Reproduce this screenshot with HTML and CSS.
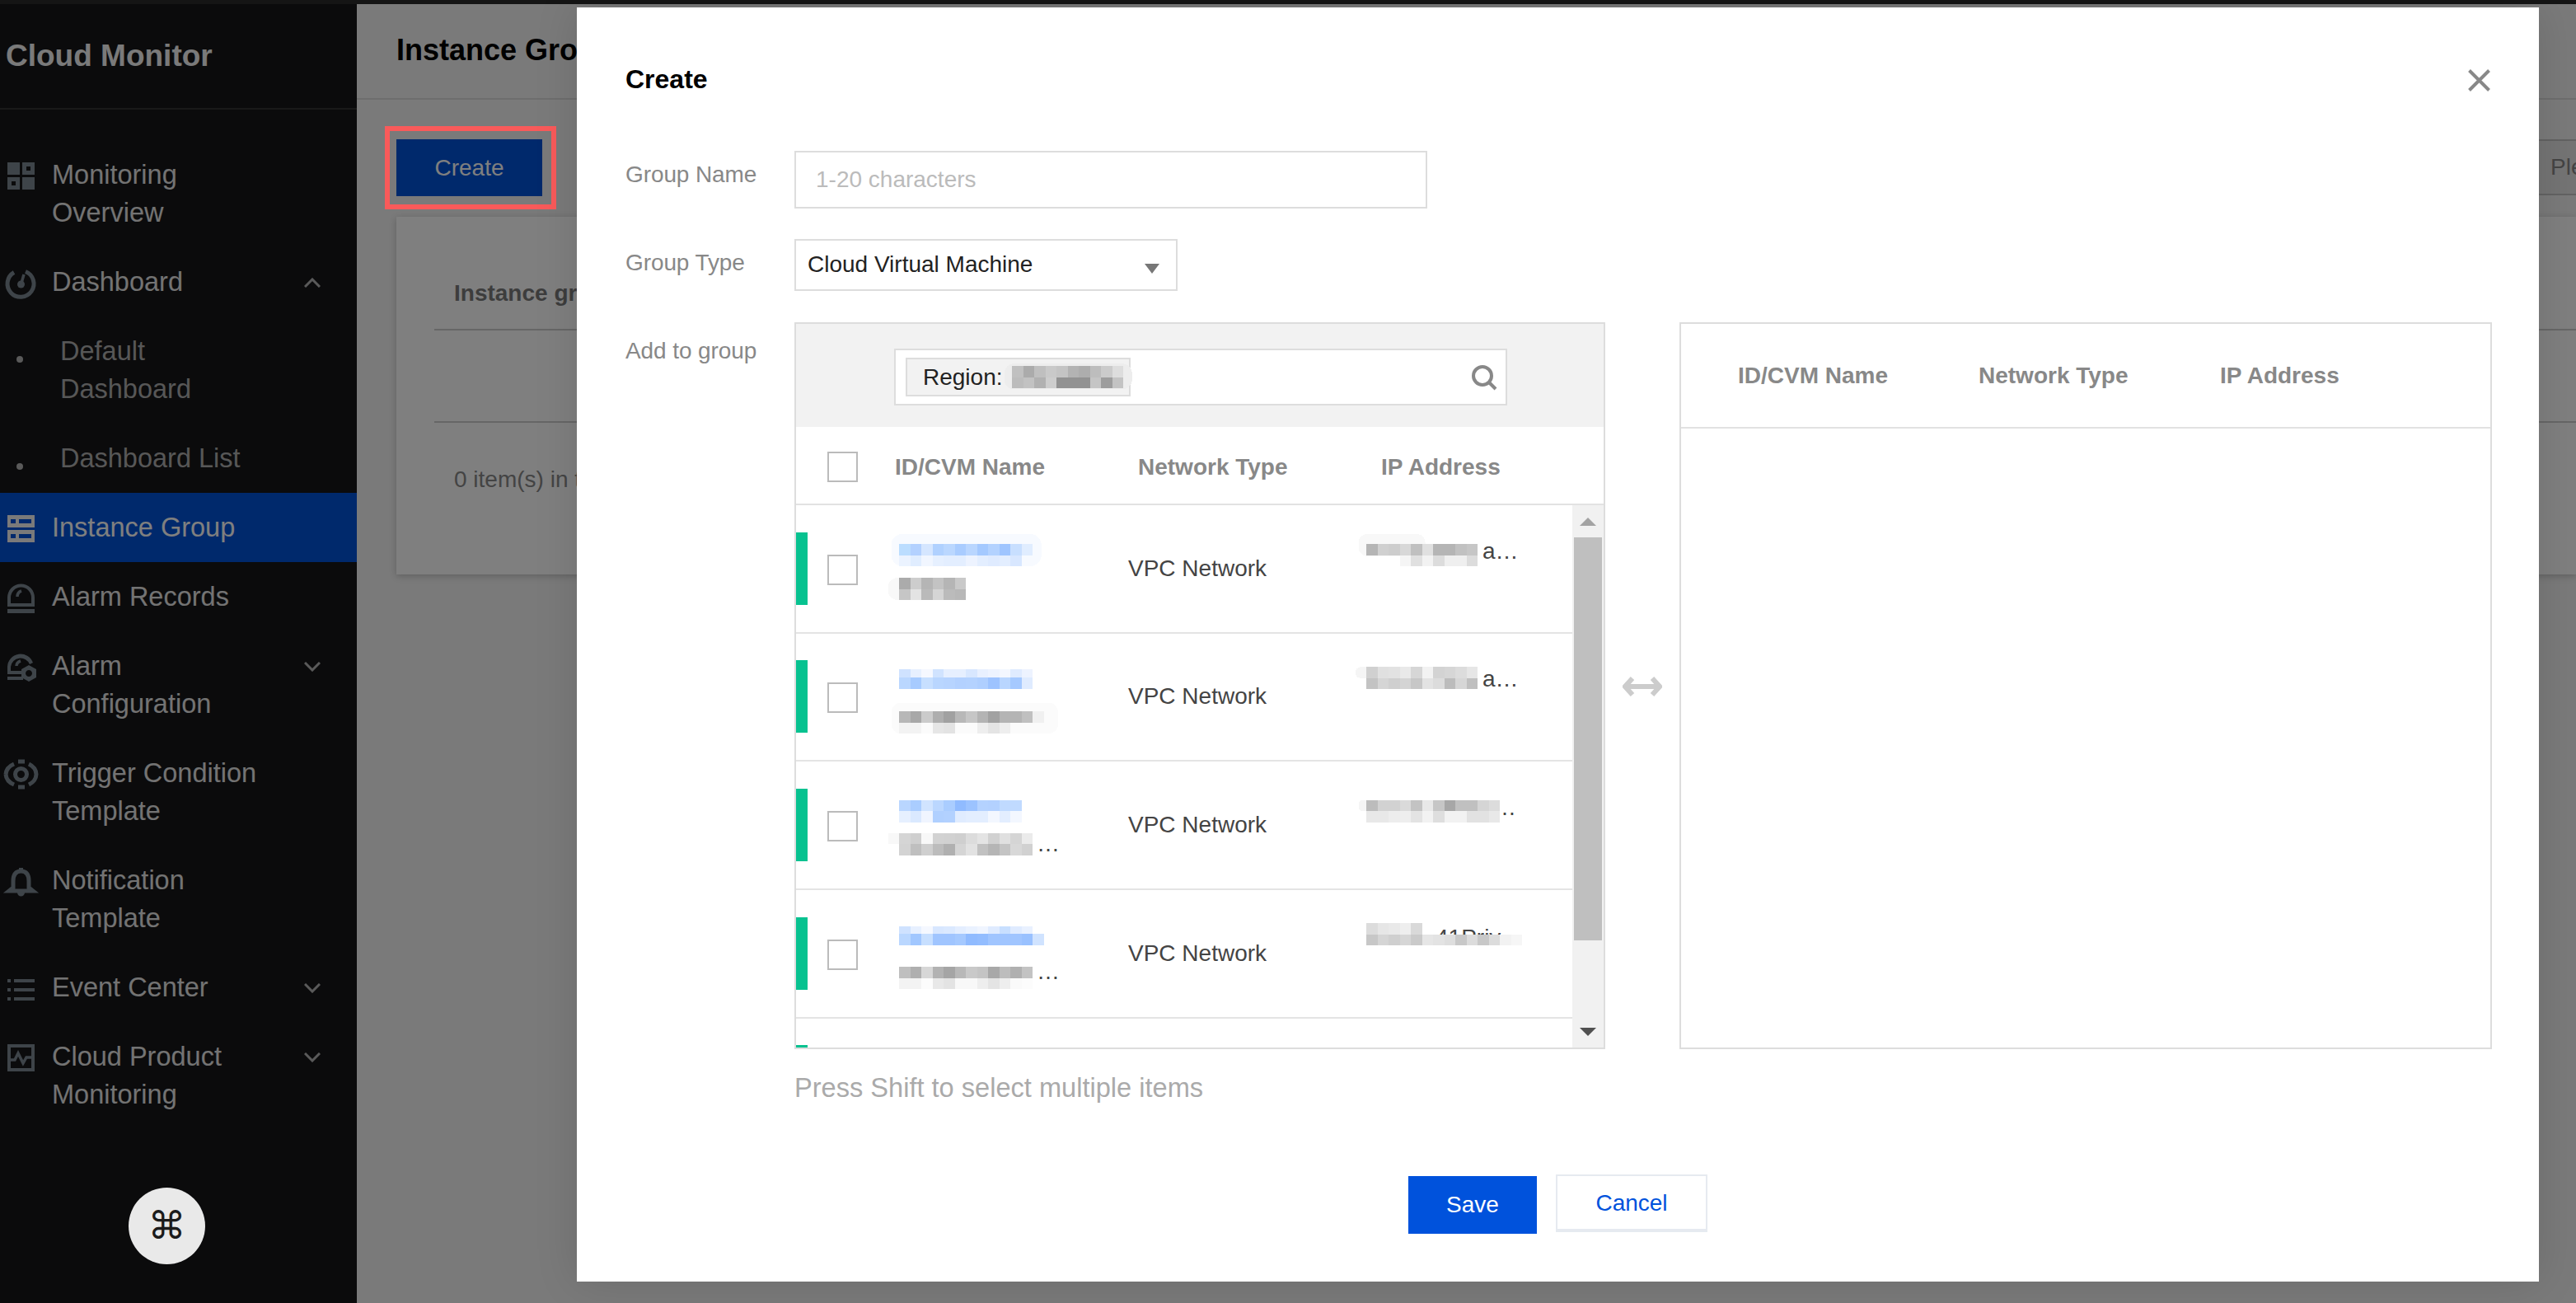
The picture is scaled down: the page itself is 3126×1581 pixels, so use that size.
FILE: index.html
```html
<!DOCTYPE html>
<html lang="en">
<head>
<meta charset="utf-8">
<title>Cloud Monitor - Instance Group</title>
<link rel="stylesheet" href="styles.css">
</head>
<body>
<div class="page">
  <div class="top-strip"></div>
  <div class="app">
    <aside class="sidebar">
      <div class="brand">Cloud Monitor</div>
      <nav class="nav">
        <a class="nav-item two">
          <svg class="nav-icon" viewBox="0 0 33 33"><path fill-rule="evenodd" d="M0 0h15v15H0zM18 0h15v15H18zM23 5v5h5V5zM0 18h15v15H0zM5 23v5h5v-5zM18 18h15v15H18z"/></svg>
          <span class="nav-label">Monitoring<br>Overview</span>
        </a>
        <a class="nav-item">
          <svg class="nav-icon" viewBox="0 0 33 33"><path class="line bold" d="M8 3.500A16 16 0 1 0 22 2.500"/><path class="line thin" d="M16.500 18 20 6"/><circle cx="16.500" cy="18" r="4.500"/></svg>
          <span class="nav-label">Dashboard</span>
          <svg class="chev" viewBox="0 0 20 12"><path d="M1 11 10 2l9 9"/></svg>
        </a>
        <a class="nav-item sub two"><i class="dot"></i><span class="nav-label">Default<br>Dashboard</span></a>
        <a class="nav-item sub"><i class="dot"></i><span class="nav-label">Dashboard List</span></a>
        <a class="nav-item active">
          <svg class="nav-icon" viewBox="0 0 33 33"><path fill-rule="evenodd" d="M0 0h33v15H0zM4 5v5h6V5zM14 5v5h15V5zM0 18h33v15H0zM4 23v5h6v-5zM14 23v5h15v-5z"/></svg>
          <span class="nav-label">Instance Group</span>
        </a>
        <a class="nav-item">
          <svg class="nav-icon" viewBox="0 0 33 33"><path fill-rule="evenodd" d="M0 27V16a16.500 16.500 0 0 1 33 0v11zM4 23h25v-7a12.500 12.500 0 0 0-25 0zM0 30h33v5H0z"/><path class="line thin" d="M12 15c0-4 2-6 5-7"/></svg>
          <span class="nav-label">Alarm Records</span>
        </a>
        <a class="nav-item two">
          <svg class="nav-icon" viewBox="0 0 33 33"><path fill-rule="evenodd" d="M0 25V16a16 16 0 0 1 31-5l-4 2A12 12 0 0 0 4 16v5h13v4zM0 28h19v4H0z"/><path class="line thin" d="M11 15c0-3 2-5 5-6"/><path fill-rule="evenodd" d="M26 14l9 5v10l-9 5-9-5V19zM26 20a4 4 0 1 0 .01 0z"/></svg>
          <span class="nav-label">Alarm<br>Configuration</span>
          <svg class="chev" viewBox="0 0 20 12"><path d="M1 1l9 9 9-9"/></svg>
        </a>
        <a class="nav-item two">
          <svg class="nav-icon" viewBox="0 0 33 33"><path class="line bold" d="M-2 16.500A18 15 0 0 1 8 4M13 1h8M26 4A18 15 0 0 1 35 16.500 18 15 0 0 1 26 29M21 32h-8M8 29A18 15 0 0 1-2 16.500"/><circle class="line bold" cx="16.500" cy="16.500" r="7"/></svg>
          <span class="nav-label">Trigger Condition<br>Template</span>
        </a>
        <a class="nav-item two">
          <svg class="nav-icon" viewBox="0 0 33 33"><path class="line bold" d="M16.500 4C9 4 7 10 7 16v8l-5 4h29l-5-4v-8c0-6-2-12-9.500-12z"/><path d="M14 0h5v4h-5zM12 30h9a4.500 4.500 0 0 1-9 0z"/></svg>
          <span class="nav-label">Notification<br>Template</span>
        </a>
        <a class="nav-item">
          <svg class="nav-icon" viewBox="0 0 33 33"><path d="M0 5h4v4H0zM8 5h25v4H8zM0 16h4v4H0zM8 16h25v4H8zM0 27h4v4H0zM8 27h25v4H8z"/></svg>
          <span class="nav-label">Event Center</span>
          <svg class="chev" viewBox="0 0 20 12"><path d="M1 1l9 9 9-9"/></svg>
        </a>
        <a class="nav-item two">
          <svg class="nav-icon" viewBox="0 0 33 33"><path fill-rule="evenodd" d="M0 0h33v33H0zM4 4v25h25V4z"/><path class="line thin" d="M3 19h6l4-8 6 12 4-7h7"/></svg>
          <span class="nav-label">Cloud Product<br>Monitoring</span>
          <svg class="chev" viewBox="0 0 20 12"><path d="M1 1l9 9 9-9"/></svg>
        </a>
      </nav>
      <button class="fab">⌘</button>
    </aside>
    <main class="main">
      <header class="main-head"><h1>Instance Group</h1></header>
      <div class="toolbar">
        <div class="create-wrap">
          <button class="btn-create">Create</button>
          <span class="callout"></span>
        </div>
        <div class="toolbar-search">Please enter</div>
      </div>
      <section class="card">
        <div class="card-head">Instance group</div>
        <div class="card-empty"></div>
        <div class="card-foot">0 item(s) in total</div>
      </section>
    </main>
  </div>
  <div class="mask"></div>

  <div class="modal">
    <h2 class="modal-title">Create</h2>
    <svg class="modal-close" viewBox="0 0 27 27"><path d="M1.500 1.500l24 24M25.500 1.500l-24 24"/></svg>

    <div class="form-row row-name">
      <label class="form-label">Group Name</label>
      <div class="input">1-20 characters</div>
    </div>
    <div class="form-row row-type">
      <label class="form-label">Group Type</label>
      <div class="select">Cloud Virtual Machine<i class="select-arrow"></i></div>
    </div>
    <div class="form-row row-add">
      <label class="form-label">Add to group</label>
      <div class="form-main">
        <div class="transfer">
          <div class="panel">
            <div class="filter">
              <div class="search">
                <div class="tag">Region:
                  <svg class="blur-region" viewBox="0 0 135 27"><g transform="scale(13.500)"><rect class="h" x="-.7" y="-.2" width="11.500" height="2.300" rx=".9" fill="#ededed"/><rect x="0" fill="#c0c0c0"/><rect x="1" fill="#ababab"/><rect x="2" fill="#bfbfbf"/><rect x="3" fill="#c9c9c9"/><rect x="4" fill="#c4c4c4"/><rect x="5" fill="#b3b3b3"/><rect x="6" fill="#adadad"/><rect x="7" fill="#bdbdbd"/><rect x="8" fill="#cbcbcb"/><rect x="9" fill="#ddd"/><rect x="0" y="1" fill="#bcbcbc"/><rect x="1" y="1" fill="#c2c2c2"/><rect x="2" y="1" fill="#b1b1b1"/><rect x="3" y="1" fill="#cdcdcd"/><rect x="4" y="1" fill="#929292"/><rect x="5" y="1" fill="#929292"/><rect x="6" y="1" fill="#929292"/><rect x="7" y="1" fill="#c5c5c5"/><rect x="8" y="1" fill="#9d9d9d"/><rect x="9" y="1" fill="#c3c3c3"/></g></svg>
                </div>
                <svg class="search-icon" viewBox="0 0 32 32"><circle cx="14" cy="14" r="11"/><path d="M22 22l8 8"/></svg>
              </div>
            </div>
            <div class="thead">
              <span class="check head-check"></span>
              <span class="th th-id">ID/CVM Name</span>
              <span class="th th-net">Network Type</span>
              <span class="th">IP Address</span>
            </div>
            <div class="tbody">
              <div class="list">
                <div class="row">
                  <i class="bar"></i><span class="check"></span>
                  <svg class="blur-name" viewBox="0 0 289 153"><g transform="translate(11 47) scale(13.500)"><rect class="h" x="-.7" y="-.9" width="13.500" height="2.900" rx="1" fill="#f7faff"/><rect x="0" fill="#bdf"/><rect x="1" fill="#b3d1ff"/><rect x="2" fill="#d5e6ff"/><rect x="3" fill="#b0d1ff"/><rect x="4" fill="#bad7ff"/><rect x="5" fill="#a9ccff"/><rect x="6" fill="#b9d6ff"/><rect x="7" fill="#a4c9ff"/><rect x="8" fill="#b3d2ff"/><rect x="9" fill="#9fc5ff"/><rect x="10" fill="#c8dfff"/><rect x="11" fill="#e0edff"/><rect x="0" y="1" fill="#ebf3ff"/><rect x="1" y="1" fill="#e0edff"/><rect x="2" y="1" fill="#f1f6ff"/><rect x="3" y="1" fill="#e6f0ff"/><rect x="4" y="1" fill="#e3eeff"/><rect x="5" y="1" fill="#e3eeff"/><rect x="6" y="1" fill="#edf3ff"/><rect x="7" y="1" fill="#e3eeff"/><rect x="8" y="1" fill="#dfebff"/><rect x="9" y="1" fill="#e3eeff"/><rect x="10" y="1" fill="#d8e7ff"/></g><g transform="translate(11 88) scale(13.500)"><rect class="h" x="-1" y="0" width="7" height="2" rx=".9" fill="#f8f8f8"/><rect x="0" fill="#ababab"/><rect x="1" fill="#cdcdcd"/><rect x="2" fill="#b5b5b5"/><rect x="3" fill="#c3c3c3"/><rect x="4" fill="#b5b5b5"/><rect x="5" fill="#c9c9c9"/><rect x="0" y="1" fill="#c6c6c6"/><rect x="1" y="1" fill="#e3e3e3"/><rect x="2" y="1" fill="#bababa"/><rect x="3" y="1" fill="#d5d5d5"/><rect x="4" y="1" fill="#bbb"/><rect x="5" y="1" fill="#b8b8b8"/></g></svg>
                  <span class="vpc">VPC Network</span>
                  <svg class="blur-ip" viewBox="0 0 210 153"><text x="159" y="65">a…</text><g transform="translate(18 47) scale(13.500)"><rect class="h" x="-.7" y="-.9" width="6" height="2" rx=".8" fill="#f8f8f8"/><rect x="0" fill="#b5b5b5"/><rect x="1" fill="#d0d0d0"/><rect x="2" fill="#cdcdcd"/><rect x="3" fill="#d8d8d8"/><rect x="4" fill="#c0c0c0"/><rect x="5" fill="#e0e0e0"/><rect x="6" fill="#b5b5b5"/><rect x="7" fill="#b5b5b5"/><rect x="8" fill="#c1c1c1"/><rect x="9" fill="#c6c6c6"/><rect x="3" y="1" fill="#f5f5f5"/><rect x="4" y="1" fill="#e0e0e0"/><rect x="5" y="1" fill="#f2f2f2"/><rect x="6" y="1" fill="#dcdcdc"/><rect x="7" y="1" fill="#efefef"/><rect x="8" y="1" fill="#efefef"/><rect x="9" y="1" fill="#dcdcdc"/></g></svg>
                </div>
                <div class="row">
                  <i class="bar"></i><span class="check"></span>
                  <svg class="blur-name" viewBox="0 0 289 153"><g transform="translate(11 39.830) scale(13.500)"><rect x="0" fill="#cfe2ff"/><rect x="1" fill="#e7f0ff"/><rect x="2" fill="#f5f8ff"/><rect x="3" fill="#d0e3ff"/><rect x="4" fill="#e6efff"/><rect x="5" fill="#e6efff"/><rect x="6" fill="#d8e7ff"/><rect x="7" fill="#e8f0ff"/><rect x="8" fill="#edf3ff"/><rect x="9" fill="#f3f7ff"/><rect x="10" fill="#dfebff"/><rect x="11" fill="#edf3ff"/><rect x="0" y="1" fill="#bad7ff"/><rect x="1" y="1" fill="#a7cbff"/><rect x="2" y="1" fill="#c7dfff"/><rect x="3" y="1" fill="#b9d6ff"/><rect x="4" y="1" fill="#b7d4ff"/><rect x="5" y="1" fill="#b3d1ff"/><rect x="6" y="1" fill="#b4d2ff"/><rect x="7" y="1" fill="#afcfff"/><rect x="8" y="1" fill="#9dc3ff"/><rect x="9" y="1" fill="#b9d6ff"/><rect x="10" y="1" fill="#a5c9ff"/><rect x="11" y="1" fill="#dfebff"/><rect class="h" x="-1" y="-.3" width="15" height=".56" fill="#fff"/></g><g transform="translate(11 94.330) scale(13.500)"><rect class="h" x="-.7" y="-.8" width="15" height="2.800" rx=".9" fill="#fbfbfb"/><rect x="0" fill="#b7b7b7"/><rect x="1" fill="#a8a8a8"/><rect x="2" fill="#cbcbcb"/><rect x="3" fill="#aeaeae"/><rect x="4" fill="#a1a1a1"/><rect x="5" fill="#b8b8b8"/><rect x="6" fill="#c6c6c6"/><rect x="7" fill="#b4b4b4"/><rect x="8" fill="#a2a2a2"/><rect x="9" fill="#b4b4b4"/><rect x="10" fill="#b4b4b4"/><rect x="11" fill="#c0c0c0"/><rect x="12" fill="#f0f0f0"/><rect x="0" y="1" fill="#f3f3f3"/><rect x="1" y="1" fill="#f3f3f3"/><rect x="3" y="1" fill="#e6e6e6"/><rect x="4" y="1" fill="#e3e3e3"/><rect x="7" y="1" fill="#eee"/><rect x="8" y="1" fill="#e4e4e4"/><rect x="9" y="1" fill="#eee"/></g></svg>
                  <span class="vpc">VPC Network</span>
                  <svg class="blur-ip" viewBox="0 0 210 153"><text x="159" y="64.330">a…</text><g transform="translate(18 40.330) scale(13.500)"><rect class="h" x="-1" y="0" width="3" height="1" rx=".5" fill="#f5f5f5"/><rect x="0" fill="#d0d0d0"/><rect x="1" fill="#e0e0e0"/><rect x="2" fill="#e2e2e2"/><rect x="3" fill="#e9e9e9"/><rect x="4" fill="#d6d6d6"/><rect x="5" fill="#f2f2f2"/><rect x="6" fill="#d3d3d3"/><rect x="7" fill="#d6d6d6"/><rect x="8" fill="#dcdcdc"/><rect x="9" fill="#e6e6e6"/><rect x="0" y="1" fill="#c3c3c3"/><rect x="1" y="1" fill="#d5d5d5"/><rect x="2" y="1" fill="#cfcfcf"/><rect x="3" y="1" fill="#d4d4d4"/><rect x="4" y="1" fill="#c7c7c7"/><rect x="5" y="1" fill="#e3e3e3"/><rect x="6" y="1" fill="#dcdcdc"/><rect x="7" y="1" fill="#bcbcbc"/><rect x="8" y="1" fill="#d6d6d6"/><rect x="9" y="1" fill="#bfbfbf"/></g></svg>
                </div>
                <div class="row">
                  <i class="bar"></i><span class="check"></span>
                  <svg class="blur-name" viewBox="0 0 289 153"><text x="178" y="108.700">…</text><g transform="translate(11 46.670) scale(13.500)"><rect x="0" fill="#b9d6ff"/><rect x="1" fill="#aacdff"/><rect x="2" fill="#d1e4ff"/><rect x="3" fill="#bbd7ff"/><rect x="4" fill="#aacdff"/><rect x="5" fill="#90bbff"/><rect x="6" fill="#9cc3ff"/><rect x="7" fill="#b4d2ff"/><rect x="8" fill="#b3d1ff"/><rect x="9" fill="#c0daff"/><rect x="10" fill="#c0daff"/><rect x="0" y="1" fill="#e6f0ff"/><rect x="1" y="1" fill="#dae9ff"/><rect x="2" y="1" fill="#f0f5ff"/><rect x="3" y="1" fill="#b0d0ff"/><rect x="4" y="1" fill="#b2d1ff"/><rect x="5" y="1" fill="#e0ecff"/><rect x="6" y="1" fill="#e3eeff"/><rect x="7" y="1" fill="#e3eeff"/><rect x="8" y="1" fill="#f3f7ff"/><rect x="9" y="1" fill="#e3eeff"/><rect x="10" y="1" fill="#f3f7ff"/></g><g transform="translate(11 86.670) scale(13.500)"><rect x="-1" fill="#f8f8f8"/><rect x="0" fill="#d5d5d5"/><rect x="1" fill="#cfcfcf"/><rect x="2" fill="#f8f8f8"/><rect x="3" fill="#d2d2d2"/><rect x="4" fill="#d1d1d1"/><rect x="5" fill="#cfcfcf"/><rect x="6" fill="#dcdcdc"/><rect x="7" fill="#e4e4e4"/><rect x="8" fill="#d1d1d1"/><rect x="9" fill="#e0e0e0"/><rect x="10" fill="#d5d5d5"/><rect x="11" fill="#ebebeb"/><rect x="0" y="1" fill="#d3d3d3"/><rect x="1" y="1" fill="#bfbfbf"/><rect x="2" y="1" fill="#cfcfcf"/><rect x="3" y="1" fill="#bcbcbc"/><rect x="4" y="1" fill="#b0b0b0"/><rect x="5" y="1" fill="#d5d5d5"/><rect x="6" y="1" fill="#e2e2e2"/><rect x="7" y="1" fill="#c1c1c1"/><rect x="8" y="1" fill="#b5b5b5"/><rect x="9" y="1" fill="#c4c4c4"/><rect x="10" y="1" fill="#d8d8d8"/><rect x="11" y="1" fill="#d1d1d1"/></g></svg>
                  <span class="vpc">VPC Network</span>
                  <svg class="blur-ip" viewBox="0 0 210 153"><text x="172" y="64.670">…</text><g transform="translate(18 46.670) scale(13.500)"><rect class="h" x="-.7" y="0" width="2" height="1" rx=".4" fill="#f5f5f5"/><rect x="0" fill="#bcbcbc"/><rect x="1" fill="#d2d2d2"/><rect x="2" fill="#d2d2d2"/><rect x="3" fill="#dadada"/><rect x="4" fill="#c3c3c3"/><rect x="5" fill="#e8e8e8"/><rect x="6" fill="#c6c6c6"/><rect x="7" fill="#a7a7a7"/><rect x="8" fill="#c0c0c0"/><rect x="9" fill="#c0c0c0"/><rect x="10" fill="#d5d5d5"/><rect x="11" fill="#dcdcdc"/><rect x="0" y="1" fill="#e8e8e8"/><rect x="1" y="1" fill="#e8e8e8"/><rect x="2" y="1" fill="#ededed"/><rect x="3" y="1" fill="#eee"/><rect x="4" y="1" fill="#e3e3e3"/><rect x="5" y="1" fill="#f2f2f2"/><rect x="6" y="1" fill="#dedede"/><rect x="7" y="1" fill="#f2f2f2"/><rect x="8" y="1" fill="#f2f2f2"/><rect x="9" y="1" fill="#e2e2e2"/><rect x="10" y="1" fill="#e2e2e2"/><rect x="11" y="1" fill="#e8e8e8"/></g></svg>
                </div>
                <div class="row">
                  <i class="bar"></i><span class="check"></span>
                  <svg class="blur-name" viewBox="0 0 289 153"><text x="178" y="108">…</text><g transform="translate(11 39.500) scale(13.500)"><rect x="0" fill="#cfe2ff"/><rect x="1" fill="#e7f0ff"/><rect x="2" fill="#f5f8ff"/><rect x="3" fill="#d8e7ff"/><rect x="4" fill="#dbe9ff"/><rect x="5" fill="#e4eeff"/><rect x="6" fill="#eaf2ff"/><rect x="7" fill="#f0f5ff"/><rect x="8" fill="#dfebff"/><rect x="9" fill="#c8dfff"/><rect x="10" fill="#dfebff"/><rect x="11" fill="#e9f1ff"/><rect x="0" y="1" fill="#bad7ff"/><rect x="1" y="1" fill="#a1c7ff"/><rect x="2" y="1" fill="#c7dfff"/><rect x="3" y="1" fill="#a0c5ff"/><rect x="4" y="1" fill="#a0c5ff"/><rect x="5" y="1" fill="#a5c9ff"/><rect x="6" y="1" fill="#90bbff"/><rect x="7" y="1" fill="#93bdff"/><rect x="8" y="1" fill="#a0c5ff"/><rect x="9" y="1" fill="#a0c5ff"/><rect x="10" y="1" fill="#a0c5ff"/><rect x="11" y="1" fill="#99c1ff"/><rect x="12" y="1" fill="#d0e3ff"/><rect class="h" x="-1" y="-.3" width="15" height=".6" fill="#fff"/></g><g transform="translate(11 93) scale(13.500)"><rect x="0" fill="#bfbfbf"/><rect x="1" fill="#afafaf"/><rect x="2" fill="#d7d7d7"/><rect x="3" fill="#b2b2b2"/><rect x="4" fill="#a5a5a5"/><rect x="5" fill="#b8b8b8"/><rect x="6" fill="#c9c9c9"/><rect x="7" fill="#c4c4c4"/><rect x="8" fill="#a8a8a8"/><rect x="9" fill="#bdbdbd"/><rect x="10" fill="#b0b0b0"/><rect x="11" fill="#c3c3c3"/><rect x="0" y="1" fill="#f3f3f3"/><rect x="1" y="1" fill="#f3f3f3"/><rect x="2" y="1" fill="#fcfcfc"/><rect x="3" y="1" fill="#e8e8e8"/><rect x="4" y="1" fill="#e3e3e3"/><rect x="5" y="1" fill="#f8f8f8"/><rect x="6" y="1" fill="#f8f8f8"/><rect x="7" y="1" fill="#eee"/><rect x="8" y="1" fill="#e4e4e4"/><rect x="9" y="1" fill="#eee"/><rect x="10" y="1" fill="#fafafa"/><rect x="11" y="1" fill="#fcfcfc"/></g></svg>
                  <span class="vpc">VPC Network</span>
                  <svg class="blur-ip" viewBox="0 0 210 153"><text x="102" y="67">41Priv</text><g transform="translate(18 40) scale(13.500)"><rect x="0" fill="#dcdcdc"/><rect x="1" fill="#e6e6e6"/><rect x="2" fill="#e9e9e9"/><rect x="3" fill="#eee"/><rect x="4" fill="#d9d9d9"/><rect x="0" y="1" fill="#c7c7c7"/><rect x="1" y="1" fill="#d5d5d5"/><rect x="2" y="1" fill="#cfcfcf"/><rect x="3" y="1" fill="#d6d6d6"/><rect x="4" y="1" fill="#cacaca"/><rect x="5" y="1" fill="#e6e6e6"/><rect x="6" y="1" fill="#e3e3e3"/><rect x="7" y="1" fill="#dedede"/><rect x="8" y="1" fill="#c8c8c8"/><rect x="9" y="1" fill="#dcdcdc"/><rect x="10" y="1" fill="#c8c8c8"/><rect x="11" y="1" fill="#dcdcdc"/><rect x="12" y="1" fill="#f2f2f2"/><rect x="13" y="1" fill="#f6f6f6"/></g></svg>
                </div>
                <div class="row"><i class="bar"></i></div>
              </div>
              <div class="scrollbar">
                <div class="sb-btn"><i class="tri-up"></i></div>
                <div class="sb-thumb"></div>
                <div class="sb-btn sb-end"><i class="tri-down"></i></div>
              </div>
            </div>
          </div>
          <div class="transfer-gap">
            <svg class="swap" viewBox="0 0 48 24"><path d="M12 2 3 12l9 10M36 2l9 10-9 10M3 12h42"/></svg>
          </div>
          <div class="panel panel-right">
            <div class="thead thead-right">
              <span class="th th-id">ID/CVM Name</span>
              <span class="th th-net">Network Type</span>
              <span class="th">IP Address</span>
            </div>
          </div>
        </div>
        <p class="hint">Press Shift to select multiple items</p>
      </div>
    </div>
    <div class="modal-foot">
      <button class="btn btn-save">Save</button>
      <button class="btn btn-cancel">Cancel</button>
    </div>
  </div>
</div>
</body>
</html>
```
FILE: styles.css
```css
* { box-sizing: border-box; }
html, body { margin: 0; padding: 0; }
body { font-family: "Liberation Sans", Arial, sans-serif; font-size: 28px; line-height: 46px; color: #444; }
button { font: inherit; border: 0; padding: 0; }
.page { position: relative; width: 3126px; height: 1581px; overflow: hidden; display: flex; flex-direction: column; background: #222; }
.top-strip { height: 5px; flex: none; background: #2a2a2a; }
.app { flex: 1; display: flex; min-height: 0; }

.sidebar { width: 433px; flex: none; background: #161618; color: #e6e6e6; }
.brand { height: 128px; border-bottom: 2px solid #333; padding: 40px 0 0 7px; font-size: 37px; font-weight: 700; line-height: 46px; white-space: nowrap; color: #f4f4f4; }
.nav { padding-top: 37px; }
.nav-item { display: flex; align-items: flex-start; padding: 19px 44px 19px 9px; height: 84px; font-size: 32.500px; }
.nav-item.two { height: 130px; }
.nav-label { margin-left: 21px; line-height: 46px; white-space: nowrap; }
.nav-icon { width: 33px; height: 33px; flex: none; margin-top: 8px; fill: #7c8892; overflow: visible; }
.nav-icon .line { fill: none; stroke: #7c8892; stroke-width: 4.500; }
.nav-icon .line.bold { stroke-width: 5; }
.nav-icon .line.thin { stroke-width: 3.500; }
.chev { width: 20px; height: 12px; flex: none; margin: 18px 0 0 auto; fill: none; stroke: #b5b5b5; stroke-width: 3; }
.nav-item.active { background: #0052d9; color: #fff; }
.active .nav-icon { fill: #f4f4f4; }
.nav-item.sub { color: #aeaeae; padding-left: 20px; }
.sub .nav-label { margin-left: 45px; }
.dot { width: 8px; height: 8px; flex: none; margin-top: 29px; border-radius: 50%; background: #b5b5b5; }
.fab { position: absolute; z-index: 3; left: 156px; top: 1441px; width: 93px; height: 93px; border-radius: 50%; background: #e9e9e9; color: #1b1b1b; font-family: "DejaVu Sans", sans-serif; font-size: 46px; line-height: 93px; text-align: center; }

.main { flex: 1; min-width: 0; background: #f4f4f4; overflow: hidden; }
.main-head { height: 116px; border-bottom: 2px solid #dcdcdc; padding: 33px 0 0 48px; }
.main-head h1 { margin: 0; font-size: 36px; line-height: 46px; color: #000; white-space: nowrap; }
.toolbar { display: flex; padding: 48px 0 0 48px; height: 117px; }
.create-wrap { position: relative; width: 177px; height: 69px; }
.btn-create { width: 100%; height: 100%; background: #0052d9; color: #fff; }
.callout { position: absolute; z-index: 3; left: -14px; top: -16px; width: 208px; height: 101px; border: 6px solid #f95a5a; }
.toolbar-search { margin-left: auto; width: 80px; height: 68px; padding-left: 47px; border: 2px solid #c4c4c4; border-right: 0; background: #e8e8e8; color: #888; line-height: 64px; overflow: hidden; white-space: nowrap; }
.card { margin: 25px 0 0 48px; height: 434px; padding: 0 0 0 46px; background: #fff; box-shadow: 0 2px 8px rgba(0,0,0,.22); }
.card-head { height: 138px; padding: 70px 0 0 24px; border-bottom: 2px solid #ccc; font-weight: 700; color: #7b7b7b; white-space: nowrap; }
.card-empty { height: 112px; border-bottom: 2px solid #ccc; }
.card-foot { padding: 46px 0 0 24px; color: #888; white-space: nowrap; }

.mask { position: absolute; z-index: 2; inset: 0; background: rgba(0,0,0,.5); }

.modal { position: absolute; z-index: 4; left: 700px; top: 9px; width: 2381px; height: 1546px; padding: 64px 0 0 59px; background: #fff; box-shadow: 0 0 50px rgba(0,0,0,.12); }
.modal-title { margin: 0 0 46px; height: 64px; font-size: 32px; line-height: 46px; font-weight: 700; color: #000; }
.modal-close { position: absolute; right: 59px; top: 75px; width: 27px; height: 27px; fill: none; stroke: #888; stroke-width: 4; }
.form-row { display: flex; align-items: flex-start; }
.form-label { width: 205px; flex: none; color: #888; letter-spacing: -.1px; }
.row-name .form-label { margin-top: 6px; }
.row-type { margin-top: 37px; }
.row-type .form-label { margin-top: 6px; }
.row-add { margin-top: 38px; }
.row-add .form-label { margin-top: 12px; }
.input { width: 768px; height: 70px; border: 2px solid #ddd; padding: 0 0 0 24px; color: #bbb; line-height: 66px; }
.select { position: relative; width: 465px; height: 63px; border: 2px solid #ddd; padding-left: 14px; color: #222; line-height: 58px; }
.select-arrow { position: absolute; right: 20px; top: 28px; border: 9px solid transparent; border-top: 12px solid #777; border-bottom: 0; }

.transfer { display: flex; height: 882px; }
.panel { width: 984px; flex: none; border: 2px solid #ddd; }
.panel-right { width: 986px; }
.filter { height: 125px; padding: 30px 0 0 119px; background: #f2f2f2; }
.search { position: relative; width: 744px; height: 69px; border: 2px solid #ddd; background: #fff; padding: 9px 0 0 12px; }
.tag { display: flex; align-items: center; width: 273px; height: 47px; padding-left: 19px; border: 2px solid #ddd; background: #f2f2f2; color: #222; white-space: nowrap; }
.blur-region { width: 135px; height: 27px; margin-left: 11px; overflow: visible; }
.search-icon { position: absolute; right: 10px; top: 17px; width: 32px; height: 32px; fill: none; stroke: #888; stroke-width: 4; }
.thead { display: flex; align-items: center; height: 95px; padding: 4px 0 0 38px; border-bottom: 2px solid #e2e2e2; }
.th { font-weight: 700; color: #888; white-space: nowrap; }
.th-id { width: 295px; }
.th-net { width: 295px; }
.head-check { margin-right: 45px; }
.thead-right { height: 127px; padding: 1px 0 0 69px; border-bottom: 2px solid #e2e2e2; }
.thead-right .th-id { width: 292px; }
.thead-right .th-net { width: 293px; }
.check { width: 37px; height: 37px; flex: none; border: 2px solid #bbb; background: #fff; }
.tbody { display: flex; height: 658px; overflow: hidden; }
.list { width: 942px; flex: none; }
.row { display: flex; align-items: center; height: 155.670px; border-bottom: 2px solid #e4e4e4; }
.row:last-child { border-bottom: 0; }
.row .check { margin: 3px 0 0 24px; }
.bar { width: 14px; height: 88px; flex: none; background: #07c290; }
.row:last-child .bar { margin-top: 32px; align-self: flex-start; }
.blur-name, .blur-ip { width: 289px; height: 153px; flex: none; align-self: flex-start; margin-left: 39px; overflow: visible; shape-rendering: crispEdges; }
.blur-ip { width: 210px; margin-left: 0; }
.blur-region { shape-rendering: crispEdges; }
.blur-name text, .blur-ip text { font-size: 28px; fill: #444; shape-rendering: auto; }
svg rect:not(.h) { width: 1px; height: 1px; }
.vpc { width: 271px; flex: none; color: #444; white-space: nowrap; }
.scrollbar { flex: 1; display: flex; flex-direction: column; background: #f1f1f1; }
.sb-btn { height: 39px; flex: none; display: flex; align-items: center; justify-content: center; }
.sb-end { margin-top: auto; }
.sb-thumb { height: 489px; flex: none; margin: 0 2px; background: #bfbfbf; }
.tri-up { border: 10px solid transparent; border-bottom: 10px solid #a3a3a3; border-top: 0; }
.tri-down { border: 10px solid transparent; border-top: 10px solid #505050; border-bottom: 0; }
.transfer-gap { width: 90px; flex: none; display: flex; align-items: center; justify-content: center; padding-top: 2px; }
.swap { width: 48px; height: 24px; fill: none; stroke: #ccc; stroke-width: 6; }
.hint { margin: 24px 0 0; font-size: 32.600px; line-height: 46px; color: #aaa; white-space: nowrap; }
.modal-foot { display: flex; justify-content: center; gap: 23px; margin: 82px 59px 0 0; }
.btn { height: 70px; }
.btn-save { width: 156px; margin-top: 2px; background: #0052dc; color: #fff; }
.btn-cancel { width: 184px; padding-top: 2px; background: #fff; border: 2px solid #e6eaf0; border-bottom-width: 4px; color: #0052dc; }
```
